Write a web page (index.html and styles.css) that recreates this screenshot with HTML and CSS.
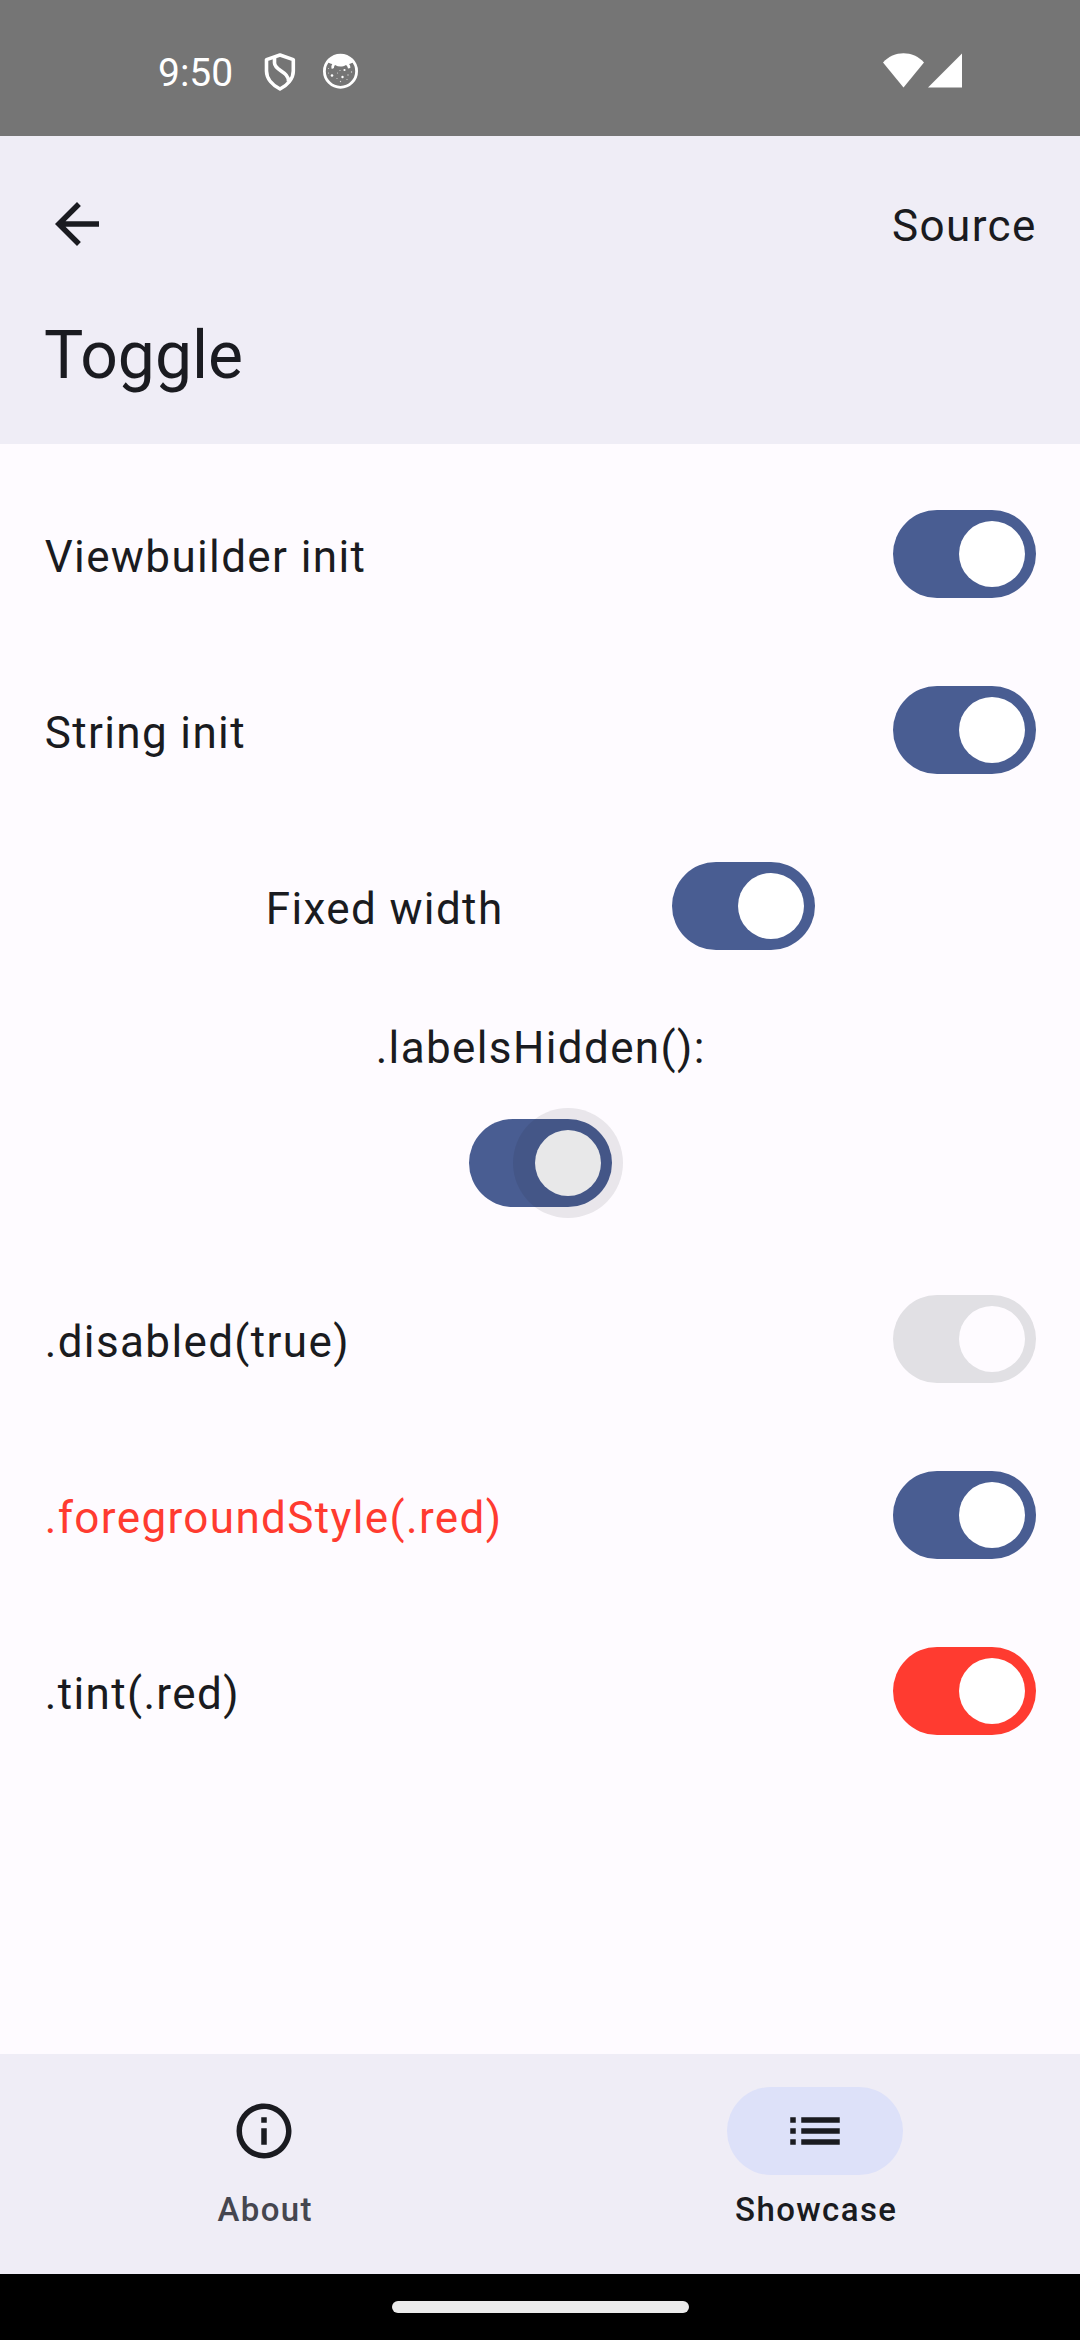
FILE: index.html
```html
<!DOCTYPE html>
<html lang="en">
<head>
<meta charset="utf-8">
<title>Toggle</title>
<link rel="stylesheet" href="styles.css">
</head>
<body>
<div class="screen">
  <div class="status-bar">
    <span class="clock">9:50</span>
    <svg class="shield" viewBox="0 0 32 38" fill="none" stroke="#fff" stroke-width="3.6" stroke-linejoin="round">
      <path d="M16 2 L29.3 6.6 V18 C29.3 26 23 32.500 16 36 C9 32.500 2.500 26 2.500 18 V6.600 Z"/>
      <path d="M10.500 4.500 V10 C10.500 17.500 25 18.500 24.500 28.500"/>
    </svg>
    <svg class="critter" viewBox="0 0 36 36">
      <circle cx="18.5" cy="18.2" r="16.100" fill="none" stroke="#fff" stroke-width="2.800"/>
      <path fill="#fff" d="M5.500 9 C8 4 12 2 18.500 2 S29 4 31.500 9 C30 10.200 28.500 10.800 27 11 C28 12 28.500 13.500 28.300 15 L26 15.600 C25.700 14 25.200 13 24 12 C20.500 14 16.500 14 13 12 C12.300 13 11.800 13.800 12 15 L9.800 16 C9 14 9.300 12.500 10.300 11 C8.500 10.800 7 10.200 5.500 9 Z"/>
      <g fill="#fff">
        <circle cx="10" cy="22.500" r="1.300"/><circle cx="20.500" cy="24" r="1.200"/><circle cx="22.500" cy="17" r="1.100"/>
      </g>
      <g fill="#fff" opacity=".7">
        <circle cx="15.500" cy="20" r=".6"/><circle cx="18" cy="17.500" r=".6"/><circle cx="26" cy="22" r=".7"/>
        <circle cx="15" cy="25.500" r=".6"/><circle cx="25" cy="26.500" r=".6"/><circle cx="18.500" cy="28.500" r=".7"/>
        <circle cx="6.500" cy="20" r=".6"/><circle cx="6.500" cy="15.500" r=".6"/><circle cx="29.500" cy="19" r=".7"/>
      </g>
    </svg>
    <svg class="signals" viewBox="0 0 80 36" fill="#fff">
      <path d="M0 9.500 C11 -2.700 30 -2.700 41 9.500 L20.500 34.500 Z"/>
      <path d="M45 34.600 L79 .6 V34.600 Z"/>
    </svg>
  </div>

  <header class="app-bar">
    <div class="app-bar-actions">
      <svg class="icon" viewBox="0 0 24 24"><path d="M20 11H7.830l5.590-5.590L12 4l-8 8 8 8 1.410-1.410L7.830 13H20v-2z"/></svg>
      <span class="body-text">Source</span>
    </div>
    <h1 class="title">Toggle</h1>
  </header>

  <main class="content">
    <div class="row"><span class="body-text">Viewbuilder init</span><span class="toggle"><i class="thumb"></i></span></div>
    <div class="row"><span class="body-text">String init</span><span class="toggle"><i class="thumb"></i></span></div>
    <div class="row row-fixed"><span class="body-text">Fixed width</span><span class="toggle"><i class="thumb"></i></span></div>
    <div class="hidden-label">
      <span class="body-text">.labelsHidden():</span>
      <span class="toggle toggle-pressed"><i class="thumb"></i></span>
    </div>
    <div class="row"><span class="body-text">.disabled(true)</span><span class="toggle toggle-disabled"><i class="thumb"></i></span></div>
    <div class="row"><span class="body-text text-red">.foregroundStyle(.red)</span><span class="toggle"><i class="thumb"></i></span></div>
    <div class="row"><span class="body-text">.tint(.red)</span><span class="toggle toggle-red"><i class="thumb"></i></span></div>
  </main>

  <nav class="tabs">
    <div class="tab">
      <span class="pill"><svg class="icon" viewBox="0 0 24 24"><path d="M11 7h2v2h-2zm0 4h2v6h-2zm1-9C6.480 2 2 6.480 2 12s4.480 10 10 10 10-4.480 10-10S17.520 2 12 2zm0 18c-4.410 0-8-3.590-8-8s3.590-8 8-8 8 3.590 8 8-3.590 8-8 8z"/></svg></span>
      <span class="tab-label">About</span>
    </div>
    <div class="tab tab-active">
      <span class="pill"><svg class="icon" viewBox="0 0 24 24"><path d="M3 13h2v-2H3v2zm0 4h2v-2H3v2zm0-8h2V7H3v2zm4 4h14v-2H7v2zm0 4h14v-2H7v2zM7 7v2h14V7H7z"/></svg></span>
      <span class="tab-label">Showcase</span>
    </div>
  </nav>
  <div class="gesture-bar"><div class="handle"></div></div>
</div>
</body>
</html>
```
FILE: styles.css
```css
* { box-sizing: border-box; }

body {
  margin: 0;
  font-family: Roboto, sans-serif;
  color: #1a1b20;
}

.screen {
  width: 1080px;
  height: 2340px;
  display: flex;
  flex-direction: column;
  overflow: hidden;
  background: #fefbff;
}

.status-bar {
  height: 136px;
  padding: 53px 117px 0 158px;
  display: flex;
  align-items: flex-start;
  background: #757575;
  color: #fff;
}

.clock {
  width: 106px;
  font-size: 39px;
  line-height: 40px;
  white-space: nowrap;
}

.shield { width: 32px; height: 38px; }
.critter { width: 36px; height: 36px; margin-left: 26px; }
.signals { width: 80px; height: 36px; margin-left: auto; }

.app-bar {
  height: 308px;
  background: #efedf6;
  padding: 55px 44px 0;
}

.app-bar-actions {
  height: 66px;
  display: flex;
  justify-content: space-between;
  align-items: center;
}

.icon {
  display: block;
  width: 66px;
  height: 66px;
  fill: #1a1b20;
}

.body-text {
  font-size: 44px;
  line-height: 66px;
  letter-spacing: 1.375px;
  margin: 0 -.69px 0 .69px;
  padding-top: 5px;
  white-space: nowrap;
}

.app-bar-actions .body-text { padding-top: 3px; }

.title {
  margin: 55px 0 0;
  font-size: 66px;
  line-height: 88px;
  font-weight: 400;
}

.content {
  flex: 1;
  padding: 66px 44px 0;
  display: flex;
  flex-direction: column;
}

.row {
  height: 88px;
  margin-bottom: 88px;
  display: flex;
  justify-content: space-between;
  align-items: center;
}

.row-fixed {
  width: 550px;
  margin: 0 auto;
}

.hidden-label {
  height: 257px;
  margin-bottom: 88px;
  padding-top: 60px;
  display: flex;
  flex-direction: column;
  justify-content: space-between;
  align-items: center;
}

.toggle {
  width: 143px;
  height: 88px;
  padding: 11px;
  border-radius: 44px;
  display: flex;
  justify-content: flex-end;
  background: #495d92;
}

.thumb {
  width: 66px;
  height: 66px;
  border-radius: 50%;
  background: #fff;
}

.toggle-red { background: #ff3b30; }
.toggle-disabled { background: #e1e0e4; }
.toggle-disabled .thumb { background: #fefbff; }

.toggle-pressed { margin-left: 1px; }

.toggle-pressed .thumb {
  position: relative;
  background: #fdfdfd;
}

.toggle-pressed .thumb::after {
  content: "";
  position: absolute;
  inset: -22px;
  border-radius: 50%;
  background: rgba(26, 27, 32, .09);
}

.text-red { color: #ff3b30; }

.tabs {
  height: 220px;
  padding-top: 33px;
  display: flex;
  gap: 22px;
  background: #efedf6;
}

.tab {
  flex: 1;
  display: flex;
  flex-direction: column;
  align-items: center;
  color: #45464f;
}

.pill {
  width: 176px;
  height: 88px;
  margin-right: 1px;
  border-radius: 44px;
  display: flex;
  align-items: center;
  justify-content: center;
}

.tab-active { color: #1a1b20; }
.tab-active .pill { background: #dde1f9; }

.tab-label {
  margin: 13px -.69px 0 .69px;
  font-size: 33px;
  line-height: 44px;
  font-weight: 500;
  letter-spacing: 1.375px;
}

.gesture-bar {
  height: 66px;
  padding-top: 27px;
  background: #000;
}

.handle {
  width: 297px;
  height: 12px;
  margin: 0 auto;
  border-radius: 6px;
  background: #ebebeb;
}
```
